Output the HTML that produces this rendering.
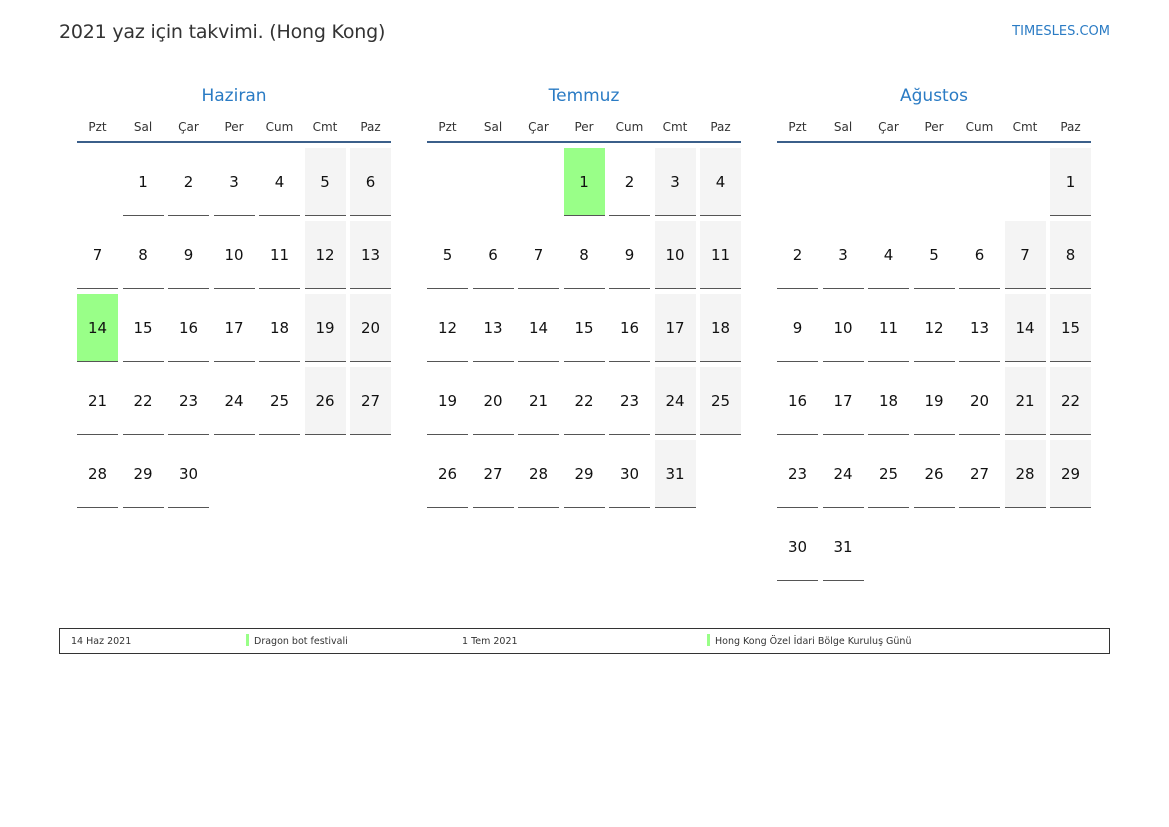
<!DOCTYPE html><html><head><meta charset="utf-8"><style>
body{margin:0;width:1169px;height:827px;background:#fff;font-family:"DejaVu Sans","Liberation Sans",sans-serif;position:relative;overflow:hidden}
.t{position:absolute;left:59px;top:21px;font-size:19px;color:#333;letter-spacing:-0.2px}
.s{position:absolute;right:59px;top:24px;font-size:13px;color:#2a7bc4}
.m{position:absolute;top:86px;width:314px}
.mn{text-align:center;font-size:17px;color:#2a7bc4;height:24px}
.wd{display:grid;grid-template-columns:repeat(7,41px);column-gap:4.5px;font-size:12px;color:#333;text-align:center;height:31px;line-height:34px;border-bottom:2px solid #3b5f8a}
.g{display:grid;grid-template-columns:repeat(7,41px);column-gap:4.5px;row-gap:5px;grid-auto-rows:68px;margin-top:5px}
.g div{box-sizing:border-box;display:flex;align-items:center;justify-content:center;font-size:15px;color:#111;padding-top:1px}
.g div.d{border-bottom:1px solid #555}
.g div.w{background:#f4f4f4}
.g div.h{background:#99ff88}
.lg{position:absolute;left:59px;top:628px;width:1049px;height:24px;border:1px solid #333;font-size:9.5px;color:#333}
.lg span{position:absolute;top:7px}
.bar{position:absolute;top:5px;width:3px;height:12px;background:#99ff88}
</style></head><body>
<div class="t">2021 yaz için takvimi. (Hong Kong)</div>
<div class="s">TIMESLES.COM</div>
<div id="c"></div>
<div class="lg"><span style="left:11px">14 Haz 2021</span><div class="bar" style="left:186px"></div><span style="left:194px">Dragon bot festivali</span><span style="left:402px">1 Tem 2021</span><div class="bar" style="left:647px"></div><span style="left:655px">Hong Kong Özel İdari Bölge Kuruluş Günü</span></div>
<script>
var ms=[["Haziran",77,1,30,14],["Temmuz",427,3,31,1],["Ağustos",777,6,31,0]];
var h="";
ms.forEach(function(m){
h+='<div class="m" style="left:'+m[1]+'px"><div class="mn">'+m[0]+'</div><div class="wd"><span>Pzt</span><span>Sal</span><span>Çar</span><span>Per</span><span>Cum</span><span>Cmt</span><span>Paz</span></div><div class="g">';
for(var i=0;i<m[2];i++)h+='<div></div>';
for(var d=1;d<=m[3];d++){var col=(m[2]+d-1)%7;var c="d";if(d==m[4])c+=" h";else if(col>=5)c+=" w";h+='<div class="'+c+'">'+d+'</div>';}
h+='</div></div>';});
document.getElementById("c").innerHTML=h;
</script>
</body></html>
